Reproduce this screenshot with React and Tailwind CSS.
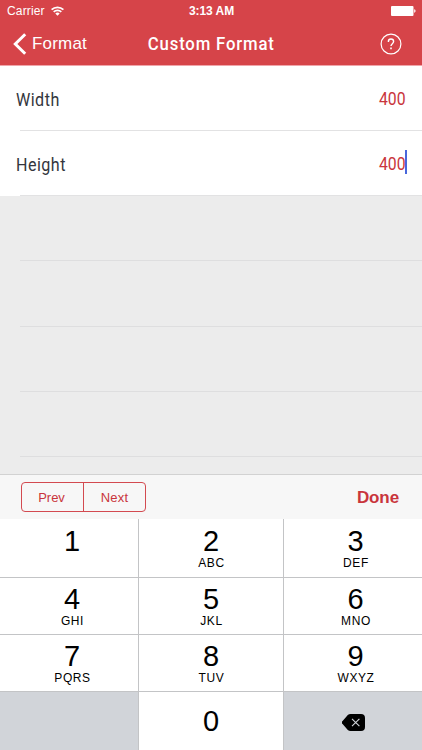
import React, { useState } from "react";

const keys = [
  { digit: "1", letters: "" },
  { digit: "2", letters: "ABC" },
  { digit: "3", letters: "DEF" },
  { digit: "4", letters: "GHI" },
  { digit: "5", letters: "JKL" },
  { digit: "6", letters: "MNO" },
  { digit: "7", letters: "PQRS" },
  { digit: "8", letters: "TUV" },
  { digit: "9", letters: "WXYZ" },
];

// The outer columns are nudged slightly to the right
const columnPadding = ["pl-[6px]", "", "pl-[5px]"];

function StatusBar() {
  return (
    <div className="grid h-[22px] grid-cols-3 items-center pl-[7px] pr-[6px] text-[12px] leading-none">
      <div className="flex items-center gap-[6px]">
        <span className="tracking-[0.15px]">Carrier</span>
        <svg width="13" height="10" viewBox="0 0 13 10" fill="none" stroke="currentColor" strokeWidth="1.8">
          <path d="M0.6 3.7a8.4 8.4 0 0 1 11.8 0" />
          <path d="M2.7 5.9a5.4 5.4 0 0 1 7.6 0" />
          <path d="M6.5 9.7 4.3 7.6a3.2 3.2 0 0 1 4.4 0Z" fill="currentColor" stroke="none" />
        </svg>
      </div>
      <span className="whitespace-nowrap text-center font-bold tracking-[-0.05px]">3:13 AM</span>
      <svg className="justify-self-end" width="25" height="10" viewBox="0 0 25 10" fill="currentColor">
        <rect width="22.5" height="10" rx="1" />
        <path d="M23.2 3.3c1.8.3 1.8 3.1 0 3.4Z" />
      </svg>
    </div>
  );
}

function Header() {
  return (
    <header className="h-[66px] border-b border-[#f0a5aa] bg-[#d64449] text-white">
      <StatusBar />
      <div className="grid h-[43px] grid-cols-[1fr_auto_1fr] items-center pl-[13px] pr-[13px]">
        <button className="flex items-center gap-[5px]">
          <svg width="14" height="22" viewBox="0 0 14 22" fill="none" stroke="currentColor" strokeWidth="3">
            <path d="M12.2 1.2 2.3 11l9.9 9.8" />
          </svg>
          <span className="text-[17px] leading-none tracking-[0.2px]">Format</span>
        </button>
        <h1 className="scale-x-[0.93] font-[Roboto] text-[18px] font-medium leading-none tracking-[0.9px]">
          Custom Format
        </h1>
        <button className="mr-[7px] justify-self-end">
          <svg width="22" height="22" viewBox="0 0 22 22" fill="none" stroke="currentColor">
            <circle cx="11" cy="11" r="9.9" strokeWidth="1.2" />
            <path d="M8.4 8.9V8.6a2.6 2.6 0 0 1 5.2 0c0 2-2.6 2.2-2.6 4.4" strokeWidth="1.4" />
            <path d="M11 14.6v1.7" strokeWidth="1.6" />
          </svg>
        </button>
      </div>
    </header>
  );
}

function FieldRow({ label, value, active }) {
  return (
    <div className="bg-white">
      <div className="flex h-[64px] items-center justify-between pl-[16px] pr-[16px] font-[Roboto] text-[17.5px]">
        <span className="mt-[4px] origin-left scale-x-[0.92] tracking-[0.5px] text-[#33363d]">{label}</span>
        <span className="relative mt-[3px] text-[#c9353c]">
          <span className="block origin-right scale-x-[0.9]">{value}</span>
          {active && <span className="absolute -right-px -top-px h-6 w-[2px] bg-[#4867dc]" />}
        </span>
      </div>
      <div className="ml-5 h-px bg-[#e2e2e3]" />
    </div>
  );
}

function App() {
  const [width] = useState("400");
  const [height, setHeight] = useState("400");

  return (
    <div className="flex h-[750px] w-[422px] flex-col overflow-hidden bg-[#ececec] font-['Liberation_Sans',Arial,sans-serif]">
      <Header />

      {/* Fields */}
      <FieldRow label="Width" value={width} />
      <FieldRow label="Height" value={height} active />

      {/* Empty rows */}
      <div className="h-[278px] overflow-hidden pl-5">
        <div className="h-[65.3px] border-b border-[#dededf]" />
        <div className="h-[65.3px] border-b border-[#dededf]" />
        <div className="h-[65.3px] border-b border-[#dededf]" />
        <div className="h-[65.3px] border-b border-[#dededf]" />
      </div>

      {/* Toolbar */}
      <div className="flex h-[45px] items-center justify-between border-t border-[#d2d2d2] bg-[#f7f7f7] pl-[21px] pr-[23px] text-[#c9353c]">
        <div className="flex h-[30px] w-[125px] divide-x divide-[#d34a50] rounded-[4px] border border-[#d34a50] text-[13px]">
          <button className="w-[62px] pr-[2px] pt-px">Prev</button>
          <button className="flex-1 pt-px tracking-[0.2px]">Next</button>
        </div>
        <button className="pt-px text-[17px] font-bold tracking-[-0.1px]">Done</button>
      </div>

      {/* Keypad */}
      <div className="grid flex-1 grid-cols-[138px_144px_138px] grid-rows-[58px_56px_56px_58px] gap-px bg-[#c3c4c6] text-black">
        {keys.map((key, i) => (
          <button
            key={key.digit}
            onClick={() => setHeight(height + key.digit)}
            className={`flex flex-col items-center justify-start bg-white ${i < 3 ? "pt-[7px]" : "pt-[6px]"} ${columnPadding[i % 3]}`}
          >
            <span className="text-[29px] leading-[30px]">{key.digit}</span>
            <span className="pl-px text-[12px] leading-[14px] tracking-[0.6px]">{key.letters}</span>
          </button>
        ))}
        <div className="bg-[#d1d4d9]" />
        <button onClick={() => setHeight(height + "0")} className="bg-white text-[29px] leading-none">
          0
        </button>
        <button
          onClick={() => setHeight(height.slice(0, -1))}
          className="flex items-center justify-center bg-[#d1d4d9] pt-[2px]"
        >
          <svg width="23" height="17" viewBox="0 0 23 17">
            <path d="M8.5 0H19a4 4 0 0 1 4 4v9a4 4 0 0 1-4 4H8.5a4 4 0 0 1-2.7-1.1L.6 10.1a2.1 2.1 0 0 1 0-3.2L5.8 1.1A4 4 0 0 1 8.5 0Z" />
            <path d="m10 4.8 7.4 7.4m0-7.4L10 12.2" stroke="#d1d4d9" strokeWidth="1.1" />
          </svg>
        </button>
      </div>
    </div>
  );
}

export default App;
